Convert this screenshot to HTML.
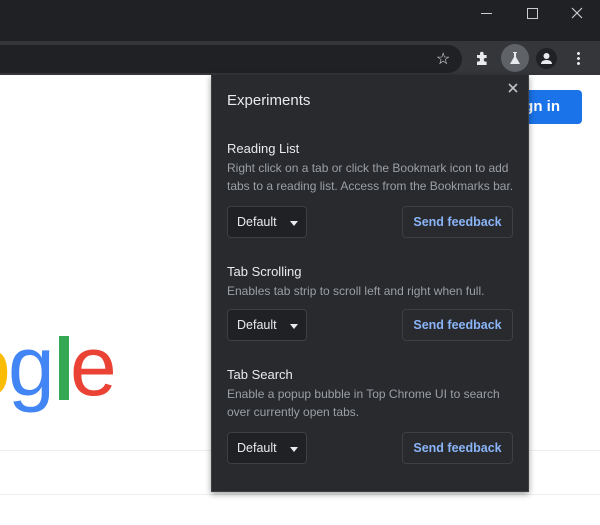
<!DOCTYPE html>
<html><head><style>
*{margin:0;padding:0;box-sizing:border-box}
body{width:600px;height:525px;overflow:hidden;background:#fff;font-family:"Liberation Sans",sans-serif;position:relative}
.a{position:absolute}
.panel{left:211px;top:75px;width:318px;height:417px;background:#292a2d;border:1px solid #3c4043;border-top:none;box-shadow:0 2px 6px rgba(0,0,0,.4)}
.t{color:#e8eaed;font-size:13px}
.d{color:#9aa0a6;font-size:12px;line-height:18px}
.sel{width:80px;height:32px;background:#202124;border:1px solid #3c4043;border-radius:4px;color:#e8eaed;font-size:12.5px;padding:8px 0 0 9px}
.sel:after{content:"";position:absolute;right:8px;top:14px;border:4px solid transparent;border-top:5px solid #e8eaed}
.fb{width:111px;height:32px;border:1px solid #3c4043;border-radius:4px;color:#8ab4f8;font-size:12.5px;font-weight:bold;text-align:center;padding-top:8px}
.lg{position:absolute;top:324px;font-size:84px;line-height:1}
</style></head><body>
<div class="a" style="left:0;top:0;width:600px;height:41px;background:#202124"></div>
<div class="a" style="left:481px;top:13px;width:11px;height:1px;background:#ccc"></div>
<div class="a" style="left:527px;top:8px;width:11px;height:11px;border:1px solid #ccc"></div>
<svg class="a" style="left:571px;top:7px" width="12" height="12"><path d="M1 1L11 11M11 1L1 11" stroke="#ccc" stroke-width="1.2"/></svg>
<div class="a" style="left:0;top:41px;width:600px;height:34px;background:#35363a"></div>
<div class="a" style="left:-20px;top:45px;width:482px;height:28px;background:#202124;border-radius:14px"></div>
<div class="a" style="left:436px;top:49px;color:#e8eaed;font-size:16px">☆</div>
<svg class="a" style="left:475px;top:50px" width="16" height="16"><path d="M2 5h3V3.5a1.8 1.8 0 0 1 3.6 0V5h3v3h-1a1.8 1.8 0 0 0 0 3.6h1V15H2v-3.5h1.2a1.8 1.8 0 0 0 0-3.6H2z" fill="#e8eaed"/></svg>
<div class="a" style="left:501px;top:44px;width:28px;height:28px;border-radius:50%;background:#5f6368"></div>
<svg class="a" style="left:507px;top:50px" width="16" height="16"><path d="M6 2h4v1h-1v4l4 7H3l4-7V3H6z" fill="#e8eaed"/></svg>
<div class="a" style="left:536px;top:48px;width:21px;height:21px;border-radius:50%;background:#202124"></div>
<svg class="a" style="left:539px;top:51px" width="15" height="15"><circle cx="7.5" cy="5" r="3" fill="#e8eaed"/><path d="M2 13c0-3 3-4 5.5-4s5.5 1 5.5 4z" fill="#e8eaed"/></svg>
<div class="a" style="left:577px;top:51px;width:3px;height:14px;background:radial-gradient(circle,#e8eaed 1.3px,transparent 1.6px) 0 0/3px 5px"></div>
<div class="a" style="left:500px;top:90px;width:82px;height:34px;background:#1a73e8;border-radius:4px;color:#fff;font-size:15px;font-weight:bold;padding:8px 0 0 10px">Sign in</div>
<div class="lg" style="left:-36px;color:#fbbc05">o</div>
<div class="lg" style="left:8px;color:#4285f4">g</div>
<div class="a" style="left:59px;top:336px;width:10px;height:64px;background:#34a853"></div>
<div class="lg" style="left:70px;color:#ea4335">e</div>
<div class="a" style="left:0;top:450px;width:600px;height:1px;background:#eee"></div>
<div class="a" style="left:0;top:494px;width:600px;height:1px;background:#eee"></div>
<div class="a panel">
<div class="a" style="left:15px;top:17px;color:#e8eaed;font-size:15px">Experiments</div>
<svg class="a" style="left:296px;top:8px" width="10" height="10"><path d="M1 1L9 9M9 1L1 9" stroke="#bdc1c6" stroke-width="1.6"/></svg>
<div class="a t" style="left:15px;top:66px">Reading List</div>
<div class="a d" style="left:15px;top:84px;width:295px">Right click on a tab or click the Bookmark icon to add tabs to a reading list. Access from the Bookmarks bar.</div>
<div class="a sel" style="left:15px;top:131px">Default</div>
<div class="a fb" style="left:190px;top:131px">Send feedback</div>
<div class="a t" style="left:15px;top:189px">Tab Scrolling</div>
<div class="a d" style="left:15px;top:207px">Enables tab strip to scroll left and right when full.</div>
<div class="a sel" style="left:15px;top:234px">Default</div>
<div class="a fb" style="left:190px;top:234px">Send feedback</div>
<div class="a t" style="left:15px;top:292px">Tab Search</div>
<div class="a d" style="left:15px;top:310px;width:285px">Enable a popup bubble in Top Chrome UI to search over currently open tabs.</div>
<div class="a sel" style="left:15px;top:357px">Default</div>
<div class="a fb" style="left:190px;top:357px">Send feedback</div>
</div>
</body></html>
